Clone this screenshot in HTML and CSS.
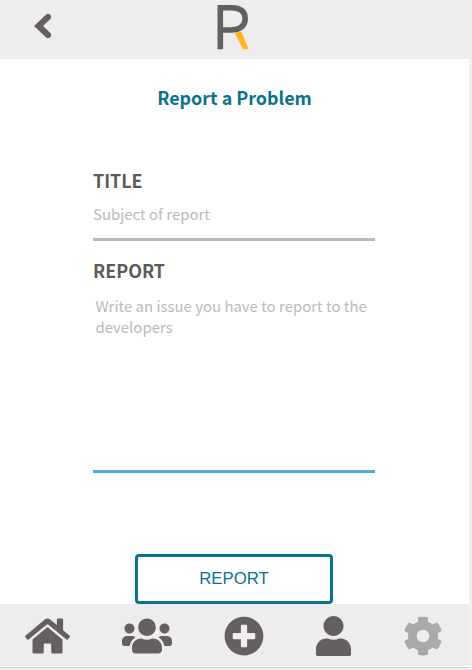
FILE: index.html
```html
<!DOCTYPE html>
<html lang="en">
<head>
<meta charset="utf-8">
<title>Report a Problem</title>
<link rel="stylesheet" href="styles.css">
</head>
<body>
<div class="app">
  <header class="topbar">
    <svg class="back" viewBox="0 0 18 26"><path d="M14 4L4.500 13l9.500 9"/></svg>
    <svg class="logo" viewBox="0 0 32 46">
      <path class="logo-body" d="M3.300 45.300V3.700H14C23.500 3.700 28.200 7.300 28.200 14.600C28.200 22 23 26 14 26H3.300"/>
      <path class="logo-leg" d="M17.500 28.600L24.500 27.800L31.500 45.300H26Z"/>
    </svg>
  </header>
  <main class="content">
    <h1 class="heading">Report a Problem</h1>
    <form class="form">
      <label class="label" for="subject">TITLE</label>
      <input class="subject" id="subject" type="text" placeholder="Subject of report">
      <label class="label" for="report">REPORT</label>
      <textarea class="report" id="report" placeholder="Write an issue you have to report to the developers"></textarea>
      <button class="submit" type="button">REPORT</button>
    </form>
  </main>
  <nav class="tabs">
    <svg viewBox="0 0 576 512"><path d="M280.370 148.260L96 300.110V464a16 16 0 0 0 16 16l112.060-.29a16 16 0 0 0 15.920-16V368a16 16 0 0 1 16-16h64a16 16 0 0 1 16 16v95.640a16 16 0 0 0 16 16.050L464 480a16 16 0 0 0 16-16V300L295.670 148.260a12.190 12.190 0 0 0-15.300 0zM571.600 251.470L488 182.560V44.050a12 12 0 0 0-12-12h-56a12 12 0 0 0-12 12v72.610L318.470 43a48 48 0 0 0-61 0L4.340 251.470a12 12 0 0 0-1.600 16.900l25.500 31A12 12 0 0 0 45.150 301l235.220-193.740a12.190 12.190 0 0 1 15.300 0L530.900 301a12 12 0 0 0 16.900-1.600l25.500-31a12 12 0 0 0-1.700-16.930z"/></svg>
    <svg viewBox="0 0 640 512"><path d="M96 224c35.300 0 64-28.700 64-64s-28.700-64-64-64-64 28.700-64 64 28.700 64 64 64zm448 0c35.300 0 64-28.700 64-64s-28.700-64-64-64-64 28.700-64 64 28.700 64 64 64zm32 32h-64c-17.600 0-33.500 7.100-45.100 18.600 40.300 22.100 68.900 62 75.100 109.400h66c17.700 0 32-14.300 32-32v-32c0-35.300-28.700-64-64-64zm-256 0c61.900 0 112-50.100 112-112S381.900 32 320 32 208 82.100 208 144s50.100 112 112 112zm76.800 32h-8.300c-20.800 10-43.900 16-68.500 16s-47.600-6-68.500-16h-8.300C179.600 288 128 339.600 128 403.200V432c0 26.500 21.500 48 48 48h288c26.500 0 48-21.500 48-48v-28.800c0-63.600-51.600-115.200-115.200-115.200zm-223.700-13.400C161.500 263.100 145.600 256 128 256H64c-35.300 0-64 28.700-64 64v32c0 17.700 14.300 32 32 32h65.900c6.300-47.400 34.900-87.300 75.200-109.400z"/></svg>
    <svg viewBox="0 0 512 512"><path d="M256 8C119 8 8 119 8 256s111 248 248 248 248-111 248-248S393 8 256 8zm144 276c0 6.600-5.400 12-12 12h-92v92c0 6.600-5.400 12-12 12h-56c-6.600 0-12-5.400-12-12v-92h-92c-6.600 0-12-5.400-12-12v-56c0-6.600 5.400-12 12-12h92v-92c0-6.600 5.400-12 12-12h56c6.600 0 12 5.400 12 12v92h92c6.600 0 12 5.400 12 12v56z"/></svg>
    <svg viewBox="0 0 448 512"><path d="M224 256c70.700 0 128-57.300 128-128S294.700 0 224 0 96 57.300 96 128s57.300 128 128 128zm89.600 32h-16.700c-22.200 10.200-46.900 16-72.900 16s-50.600-5.800-72.900-16h-16.700C60.200 288 0 348.200 0 422.400V488c0 13 11 24 24 24h400c13 0 24-11 24-24v-65.600c0-74.200-60.200-134.400-134.400-134.400z"/></svg>
    <svg class="active" viewBox="0 0 512 512"><path d="M487.400 315.700l-42.600-24.600c4.300-23.200 4.300-47 0-70.200l42.600-24.600c4.900-2.800 7.100-8.600 5.500-14-11.100-35.600-30-67.800-54.700-94.600-3.800-4.100-10-5.100-14.800-2.300L380.800 110c-17.900-15.400-38.500-27.300-60.800-35.100V25.800c0-5.600-3.900-10.500-9.400-11.700-36.700-8.200-74.300-7.800-109.200 0-5.500 1.200-9.400 6.100-9.400 11.700V75c-22.200 7.900-42.800 19.800-60.800 35.100L88.700 85.500c-4.900-2.800-11-1.900-14.800 2.300-24.700 26.700-43.600 58.900-54.700 94.600-1.700 5.400.6 11.200 5.500 14L67.300 221c-4.300 23.200-4.300 47 0 70.200l-42.600 24.600c-4.900 2.800-7.100 8.600-5.500 14 11.100 35.600 30 67.800 54.700 94.600 3.800 4.100 10 5.100 14.800 2.300l42.600-24.600c17.900 15.400 38.500 27.300 60.800 35.100v49.200c0 5.600 3.900 10.500 9.400 11.700 36.700 8.200 74.300 7.800 109.200 0 5.500-1.200 9.400-6.100 9.400-11.700v-49.200c22.200-7.900 42.800-19.800 60.800-35.100l42.600 24.600c4.900 2.800 11 1.900 14.800-2.300 24.700-26.700 43.600-58.900 54.700-94.600 1.500-5.500-.7-11.300-5.600-14.100zM256 336c-44.100 0-80-35.900-80-80s35.900-80 80-80 80 35.900 80 80-35.900 80-80 80z"/></svg>
  </nav>
</div>
</body>
</html>
```
FILE: styles.css
```css
* { box-sizing: border-box; }
body {
  margin: 0;
  height: 670px;
  overflow: hidden;
  background: #f1f1f1;
  font-family: "Noto Sans CJK JP", "Noto Sans", sans-serif;
}
.app {
  display: flex;
  flex-direction: column;
  width: 469px;
  height: 668px;
  background: #fff;
  border-bottom: 1px solid #cfcfcf;
}
.topbar {
  flex: none;
  display: flex;
  align-items: flex-start;
  width: 472px;
  height: 59px;
  padding: 4px 0 0 34px;
  background: #ededed;
}
.back { width: 18px; height: 26px; margin-top: 9px; }
.back path {
  fill: none;
  stroke: #665f60;
  stroke-width: 6.2;
  stroke-linecap: round;
}
.logo { width: 32px; height: 46px; margin-left: 165px; }
.logo-body { fill: none; stroke: #665f60; stroke-width: 5.6; }
.logo-leg { fill: #fbb41f; }
.content { flex: none; height: 545px; }
.heading {
  height: 26px;
  margin: 26px 0 0;
  text-align: center;
  font-size: 17.9px;
  line-height: 24px;
  font-weight: 700;
  color: #0a7190;
}
.form {
  display: flex;
  flex-direction: column;
  width: 282px;
  margin: 57px 0 0 93px;
}
.label {
  height: 26px;
  line-height: 24px;
  font-size: 17.9px;
  font-weight: 700;
  color: #5d5a5b;
}
.subject, .report {
  width: 282px;
  border: 0;
  border-bottom: 3px solid #b9b9b9;
  outline: 0;
  background: transparent;
  font: 400 14.95px/21px "Noto Sans CJK JP", "Noto Sans", sans-serif;
  resize: none;
}
.subject { height: 47px; padding: 0 0 6px; margin-bottom: 17px; }
.report {
  height: 189px;
  padding: 11px 2px 0 2.5px;
  border-color: #52a9d9;
}
.subject::placeholder, .report::placeholder { color: #bababa; opacity: 1; }
.submit {
  width: 198px;
  height: 50px;
  margin: 81px 0 0 42px;
  padding: 0;
  border: 3px solid #0a7190;
  border-radius: 4px;
  background: #fff;
  color: #0a7190;
  font: 16.8px "Liberation Sans", sans-serif;
}
.tabs {
  flex: none;
  display: flex;
  gap: 52px;
  height: 63px;
  padding: 12px 0 0 25px;
  background: #ededed;
  border-bottom: 1px solid #fff;
}
.tabs svg { flex: none; height: 40px; fill: #665f60; }
.tabs .active { fill: #aaa8a8; }
```
